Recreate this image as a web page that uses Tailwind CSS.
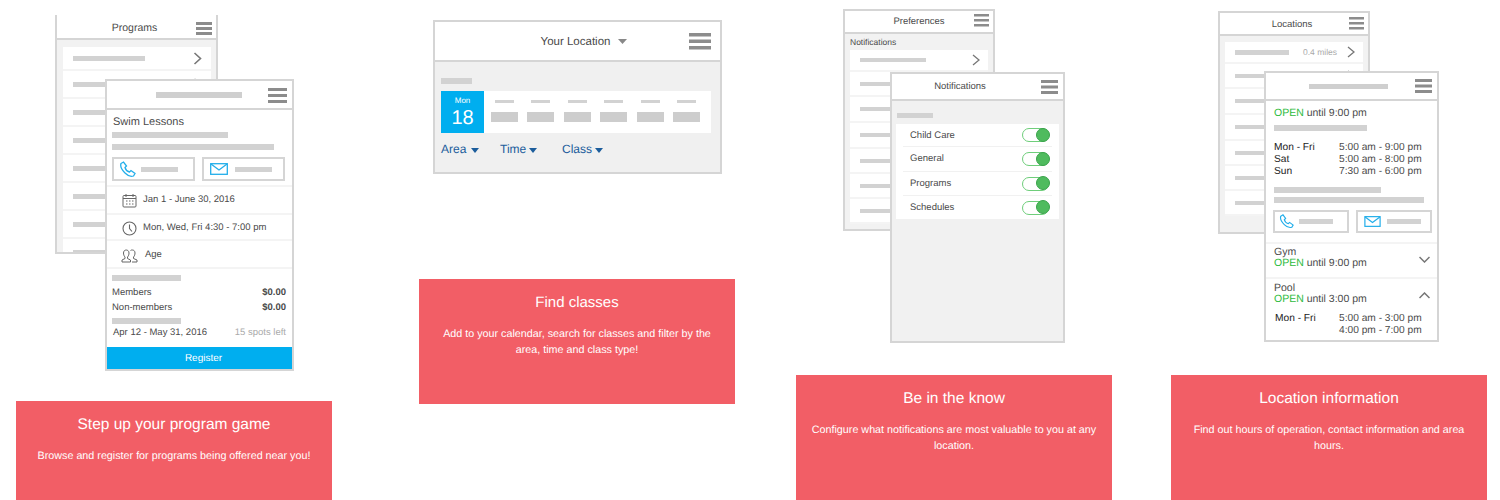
<!DOCTYPE html>
<html lang="en">
<head>
  <meta charset="UTF-8" />
  <title>App features</title>
  <script src="https://cdn.jsdelivr.net/npm/@tailwindcss/browser@4"></script>
</head>
<body class="flex h-[500px] w-[1500px] overflow-hidden bg-white pl-[16px] font-['Liberation_Sans',Arial,sans-serif] text-[#4a4a4a] [text-rendering:geometricPrecision]">

  <!-- programs -->
  <section class="w-[316px] shrink-0">
    <div class="relative h-[401px]">
      <div class="absolute left-[39px] top-[15px] h-[239px] w-[163px] overflow-hidden border-x-2 border-b-2 border-[#d5d5d5] bg-[#f2f2f2]">
        <div class="flex h-[25px] items-center justify-center border-b-2 border-[#d5d5d5] bg-white pr-[4px] pt-[4px] text-[10.5px]">Programs
          <svg class="absolute right-[3px] top-[7px]" width="17" height="14" viewBox="0 0 17 14" fill="#8c8c8c"><rect width="16" height="3" y="0"/><rect width="16" height="3" y="5"/><rect width="16" height="3" y="10"/></svg>
        </div>
        <div class="ml-[6px] mr-[5px] mt-[7px] bg-white">
          <div class="flex h-[24px] items-center justify-between border-b-2 border-[#f4f4f4] pl-[10px] pr-[9px]"><div class="h-[5px] w-[72px] bg-[#d2d2d2]"></div><svg width="9" height="13" viewBox="0 0 9 13" fill="none" stroke="#777" stroke-width="1.6"><path d="M1.500 1l6 5.500-6 5.500"/></svg></div>
          <div class="flex h-[28px] items-center justify-between border-b-2 border-[#f4f4f4] pl-[10px] pr-[9px]"><div class="h-[5px] w-[72px] bg-[#d2d2d2]"></div><svg width="9" height="13" viewBox="0 0 9 13" fill="none" stroke="#777" stroke-width="1.6"><path d="M1.500 1l6 5.500-6 5.500"/></svg></div>
          <div class="flex h-[28px] items-center border-b-2 border-[#f4f4f4] pl-[10px]"><div class="h-[5px] w-[72px] bg-[#d2d2d2]"></div></div>
          <div class="flex h-[28px] items-center border-b-2 border-[#f4f4f4] pl-[10px]"><div class="h-[5px] w-[72px] bg-[#d2d2d2]"></div></div>
          <div class="flex h-[28px] items-center border-b-2 border-[#f4f4f4] pl-[10px]"><div class="h-[5px] w-[72px] bg-[#d2d2d2]"></div></div>
          <div class="flex h-[28px] items-center border-b-2 border-[#f4f4f4] pl-[10px]"><div class="h-[5px] w-[72px] bg-[#d2d2d2]"></div></div>
          <div class="flex h-[28px] items-center border-b-2 border-[#f4f4f4] pl-[10px]"><div class="h-[5px] w-[72px] bg-[#d2d2d2]"></div></div>
          <div class="flex h-[28px] items-center border-b-2 border-[#f4f4f4] pl-[10px]"><div class="h-[5px] w-[72px] bg-[#d2d2d2]"></div></div>
        </div>
      </div>
      <div class="absolute left-[89px] top-[79px] h-[292px] w-[189px] overflow-hidden border-2 border-[#d5d5d5] bg-white">
        <div class="relative flex h-[29px] items-center border-b-2 border-[#d5d5d5] pl-[49px]">
          <div class="h-[6px] w-[86px] bg-[#cfcfcf]"></div>
          <svg class="absolute right-[5px] top-[7px]" width="19" height="15" viewBox="0 0 19 15" fill="#8c8c8c"><rect width="19" height="3" y="0"/><rect width="19" height="3" y="6"/><rect width="19" height="3" y="12"/></svg>
        </div>
        <div class="px-[5px]">
          <p class="pl-[1px] pt-[5px] text-[11px] leading-[14px]">Swim Lessons</p>
          <div class="mt-[3px] h-[6px] w-[116px] bg-[#d2d2d2]"></div>
          <div class="mt-[6px] h-[6px] w-[162px] bg-[#d2d2d2]"></div>
          <div class="mt-[7px] flex gap-[7px]">
            <div class="flex h-[24px] w-[83px] shrink-0 items-center border-2 border-[#d5d5d5] pl-[5px]">
              <svg width="17" height="17" viewBox="0 0 17 17" fill="none" stroke="#22aeea" stroke-width="1.3"><path d="M2 2.500l2.500-1.500 3 4-1.500 1.500c.5 2 2.500 4 4.500 4.500l1.500-1.500 4 3-1.500 2.500c-3 1-6-.5-8.500-3S1 5.500 2 2.500z"/></svg>
              <div class="ml-[5px] h-[5px] w-[37px] bg-[#d2d2d2]"></div>
            </div>
            <div class="flex h-[24px] w-[83px] shrink-0 items-center border-2 border-[#d5d5d5] pl-[6px]">
              <svg width="18" height="12" viewBox="0 0 18 12" fill="none" stroke="#22aeea" stroke-width="1.300"><rect x=".7" y=".7" width="16.600" height="10.600"/><path d="M1 1l8 6 8-6"/></svg>
              <div class="ml-[7px] h-[5px] w-[37px] bg-[#d2d2d2]"></div>
            </div>
          </div>
        </div>
        <div class="mt-[4px] flex h-[28px] items-center border-t-2 border-[#f4f4f4] pl-[15px] text-[9.500px]">
          <svg width="15" height="15" viewBox="0 0 15 15" fill="none" stroke="#666" stroke-width="1"><rect x="1" y="2.500" width="13" height="11.500" rx="1"/><path d="M1 5.500h13M4 1v3M11 1v3M4 8h1.500M7 8h1.500M10 8h1.500M4 11h1.500M7 11h1.500M10 11h1.500"/></svg>
          <span class="ml-[6px]">Jan 1 - June 30, 2016</span>
        </div>
        <div class="flex h-[26px] items-center border-t-2 border-[#f4f4f4] pl-[15px] pt-[2px] text-[9.500px]">
          <svg width="15" height="15" viewBox="0 0 15 15" fill="none" stroke="#666" stroke-width="1.100"><circle cx="7.500" cy="7.500" r="6.500"/><path d="M7.500 3.500v4l2.500 3"/></svg>
          <span class="ml-[6px]">Mon, Wed, Fri 4:30 - 7:00 pm</span>
        </div>
        <div class="flex h-[28px] items-center border-t-2 border-[#f4f4f4] pl-[14px] pt-[3px] text-[9.500px]">
          <svg width="17" height="14" viewBox="0 0 17 14" fill="none" stroke="#666" stroke-width="1"><path d="M1 13v-2l3-1.500V8C3 7 2.500 5.500 2.500 4c0-2 1.300-3 2.700-3s2.800 1 2.800 3c0 1.500-.5 3-1.500 4v1.500l3 1.500v2zM9.500 1.500C10 1 10.500 1 11.300 1c1.500 0 2.700 1 2.700 3 0 1.500-.5 3-1.500 4v1.500l3.500 1.500v2h-5"/></svg>
          <span class="ml-[7px]">Age</span>
        </div>
        <div class="border-t-2 border-[#f4f4f4] px-[5px] text-[9.500px]">
          <div class="mt-[6px] h-[6px] w-[69px] bg-[#d2d2d2]"></div>
          <div class="mt-[4px] flex h-[16px] items-center justify-between pr-[1px]"><span>Members</span><b class="font-bold">$0.00</b></div>
          <div class="flex h-[15px] items-center justify-between pr-[1px]"><span>Non-members</span><b class="font-bold">$0.00</b></div>
          <div class="mt-[2px] h-[6px] w-[69px] bg-[#d2d2d2]"></div>
          <div class="mt-[1px] flex h-[16px] items-center justify-between pl-[1px] pr-[1px]"><span>Apr 12 - May 31, 2016</span><span class="text-[#aaa]">15 spots left</span></div>
        </div>
        <div class="absolute inset-x-0 bottom-0 flex h-[22px] items-center justify-center bg-[#00aeef] pl-[8px] text-[10px] text-white">Register</div>
      </div>
    </div>
    <div class="h-[99px] bg-[#f25e66] px-[12px] text-center text-white">
      <h2 class="pt-[15px] text-[15.500px] leading-[18px]">Step up your program game</h2>
      <p class="mt-[14px] text-[10.750px] leading-[16px]">Browse and register for programs being offered near you!</p>
    </div>
  </section>

  <!-- classes -->
  <section class="ml-[87px] w-[316px] shrink-0">
    <div class="ml-[14px] mt-[20px] h-[154px] w-[289px] border-2 border-[#d5d5d5] bg-[#f0f0f0]">
      <div class="relative flex h-[40px] items-center justify-center border-b-2 border-[#d5d5d5] bg-white pl-[13px] pt-[4px] text-[11.500px]">
        Your Location
        <svg class="-mt-[3px] ml-[8px]" width="9" height="5" viewBox="0 0 9 5" fill="#888"><path d="M0 0h9L4.500 5z"/></svg>
        <svg class="absolute right-[9px] top-[11px]" width="22" height="17" viewBox="0 0 22 17" fill="#8c8c8c"><rect width="22" height="3.500" y="0"/><rect width="22" height="3.500" y="6.500"/><rect width="22" height="3.500" y="13"/></svg>
      </div>
      <div class="ml-[6px] mt-[16px] h-[6px] w-[31px] bg-[#d2d2d2]"></div>
      <div class="ml-[6px] mt-[7px] flex h-[42px] w-[270px] bg-white">
        <div class="flex w-[43px] flex-col items-center bg-[#00aeef] pt-[5px] text-white">
          <span class="text-[8px] leading-[10px]">Mon</span>
          <span class="text-[20px] leading-[24px]">18</span>
        </div>
        <div class="flex gap-[9.400px] pl-[7px] pt-[9px]">
          <div class="flex flex-col items-center gap-[9px]"><div class="h-[3px] w-[19px] bg-[#d2d2d2]"></div><div class="h-[10px] w-[27px] bg-[#cdcdcd]"></div></div>
          <div class="flex flex-col items-center gap-[9px]"><div class="h-[3px] w-[19px] bg-[#d2d2d2]"></div><div class="h-[10px] w-[27px] bg-[#cdcdcd]"></div></div>
          <div class="flex flex-col items-center gap-[9px]"><div class="h-[3px] w-[19px] bg-[#d2d2d2]"></div><div class="h-[10px] w-[27px] bg-[#cdcdcd]"></div></div>
          <div class="flex flex-col items-center gap-[9px]"><div class="h-[3px] w-[19px] bg-[#d2d2d2]"></div><div class="h-[10px] w-[27px] bg-[#cdcdcd]"></div></div>
          <div class="flex flex-col items-center gap-[9px]"><div class="h-[3px] w-[19px] bg-[#d2d2d2]"></div><div class="h-[10px] w-[27px] bg-[#cdcdcd]"></div></div>
          <div class="flex flex-col items-center gap-[9px]"><div class="h-[3px] w-[19px] bg-[#d2d2d2]"></div><div class="h-[10px] w-[27px] bg-[#cdcdcd]"></div></div>
        </div>
      </div>
      <div class="mt-[8px] flex pl-[6px] text-[12px] leading-[16px] text-[#1c5d9c]">
        <span class="flex w-[59px] items-center">Area<svg class="ml-[5px] mt-[2px]" width="8" height="5" viewBox="0 0 8 5" fill="#1c5d9c"><path d="M0 0h8L4 5z"/></svg></span>
        <span class="flex w-[62px] items-center">Time<svg class="ml-[3px] mt-[2px]" width="8" height="5" viewBox="0 0 8 5" fill="#1c5d9c"><path d="M0 0h8L4 5z"/></svg></span>
        <span class="flex items-center">Class<svg class="ml-[3px] mt-[2px]" width="8" height="5" viewBox="0 0 8 5" fill="#1c5d9c"><path d="M0 0h8L4 5z"/></svg></span>
      </div>
    </div>
    <div class="mt-[105px] h-[125px] bg-[#f25e66] px-[20px] text-center text-white">
      <h2 class="pt-[15px] text-[15px] leading-[18px]">Find classes</h2>
      <p class="mt-[14px] text-[10.750px] leading-[16px]">Add to your calendar, search for classes and filter by the area, time and class type!</p>
    </div>
  </section>

  <!-- notifications -->
  <section class="ml-[61px] w-[316px] shrink-0">
    <div class="relative h-[375px]">
      <div class="absolute left-[47px] top-[9px] h-[222px] w-[152px] overflow-hidden border-2 border-[#d5d5d5] bg-[#f2f2f2]">
        <div class="relative flex h-[23px] items-center justify-center border-b-2 border-[#d5d5d5] bg-white pt-[2px] text-[9.500px]">Preferences
          <svg class="absolute right-[4px] top-[3px]" width="15" height="13" viewBox="0 0 15 13" fill="#8c8c8c"><rect width="15" height="2.500" y="0"/><rect width="15" height="2.500" y="5"/><rect width="15" height="2.500" y="10"/></svg>
        </div>
        <p class="pl-[5px] pt-[2px] text-[8.500px] leading-[12px]">Notifications</p>
        <div class="mx-[5px] mt-[2px] bg-white">
          <div class="flex h-[22px] items-center justify-between border-b-2 border-[#f4f4f4] pl-[10px] pr-[8px]"><div class="h-[4px] w-[66px] bg-[#d2d2d2]"></div><svg width="8" height="12" viewBox="0 0 8 12" fill="none" stroke="#777" stroke-width="1.300"><path d="M1 1l6 5-6 5"/></svg></div>
          <div class="flex h-[25px] items-center border-b-2 border-[#f4f4f4] pl-[10px]"><div class="h-[4px] w-[66px] bg-[#d2d2d2]"></div></div>
          <div class="flex h-[26px] items-center border-b-2 border-[#f4f4f4] pl-[10px]"><div class="h-[4px] w-[66px] bg-[#d2d2d2]"></div></div>
          <div class="flex h-[26px] items-center border-b-2 border-[#f4f4f4] pl-[10px]"><div class="h-[4px] w-[66px] bg-[#d2d2d2]"></div></div>
          <div class="flex h-[25px] items-center border-b-2 border-[#f4f4f4] pl-[10px]"><div class="h-[4px] w-[66px] bg-[#d2d2d2]"></div></div>
          <div class="flex h-[25px] items-center border-b-2 border-[#f4f4f4] pl-[10px]"><div class="h-[4px] w-[66px] bg-[#d2d2d2]"></div></div>
          <div class="flex h-[25px] items-center border-b-2 border-[#f4f4f4] pl-[10px]"><div class="h-[4px] w-[66px] bg-[#d2d2d2]"></div></div>
        </div>
      </div>
      <div class="absolute left-[94px] top-[72px] h-[271px] w-[175px] border-2 border-[#d5d5d5] bg-[#f1f1f1]">
        <div class="relative flex h-[27px] items-center justify-center border-b-2 border-[#d5d5d5] bg-white pr-[35px] pt-[2px] text-[9.500px]">Notifications
          <svg class="absolute right-[5px] top-[6px]" width="17" height="14" viewBox="0 0 17 14" fill="#8c8c8c"><rect width="17" height="3" y="0"/><rect width="17" height="3" y="5.500"/><rect width="17" height="3" y="11"/></svg>
        </div>
        <div class="ml-[5px] mt-[12px] h-[5px] w-[36px] bg-[#d2d2d2]"></div>
        <div class="ml-[4px] mt-[6px] w-[163px] bg-white px-[7px] text-[9.500px]">
          <div class="flex h-[23px] items-center justify-between border-b border-[#f1f1f1] pl-[7px] pr-[3px] pt-[2px]">Child Care<div class="-mt-[2px] flex h-[14px] w-[27px] justify-end rounded-full border-[1.500px] border-[#6fce7b]"><div class="-my-[1.500px] -mr-[1.500px] size-[14px] rounded-full border border-[#3aa34b] bg-[#4fbb5e]"></div></div></div>
          <div class="flex h-[25px] items-center justify-between border-b border-[#f1f1f1] pl-[7px] pr-[3px]">General<div class="flex h-[14px] w-[27px] justify-end rounded-full border-[1.500px] border-[#6fce7b]"><div class="-my-[1.500px] -mr-[1.500px] size-[14px] rounded-full border border-[#3aa34b] bg-[#4fbb5e]"></div></div></div>
          <div class="flex h-[24px] items-center justify-between border-b border-[#f1f1f1] pl-[7px] pr-[3px] pt-[2px]">Programs<div class="-mt-[2px] flex h-[14px] w-[27px] justify-end rounded-full border-[1.500px] border-[#6fce7b]"><div class="-my-[1.500px] -mr-[1.500px] size-[14px] rounded-full border border-[#3aa34b] bg-[#4fbb5e]"></div></div></div>
          <div class="flex h-[23px] items-center justify-between pl-[7px] pr-[3px] pt-[2px]">Schedules<div class="-mt-[2px] flex h-[14px] w-[27px] justify-end rounded-full border-[1.500px] border-[#6fce7b]"><div class="-my-[1.500px] -mr-[1.500px] size-[14px] rounded-full border border-[#3aa34b] bg-[#4fbb5e]"></div></div></div>
        </div>
      </div>
    </div>
    <div class="h-[125px] bg-[#f25e66] px-[12px] text-center text-white">
      <h2 class="pt-[15px] text-[15.500px] leading-[18px]">Be in the know</h2>
      <p class="mt-[14px] text-[10.750px] leading-[16px]">Configure what notifications are most valuable to you at any location.</p>
    </div>
  </section>

  <!-- locations -->
  <section class="ml-[59px] w-[316px] shrink-0">
    <div class="relative h-[375px]">
      <div class="absolute left-[47px] top-[11px] h-[223px] w-[152px] overflow-hidden border-2 border-[#d5d5d5] bg-[#f2f2f2]">
        <div class="relative flex h-[23px] items-center justify-center border-b-2 border-[#d5d5d5] bg-white pr-[4px] pt-[4px] text-[9.500px]">Locations
          <svg class="absolute right-[4px] top-[4px]" width="15" height="13" viewBox="0 0 15 13" fill="#8c8c8c"><rect width="15" height="2.500" y="0"/><rect width="15" height="2.500" y="5"/><rect width="15" height="2.500" y="10"/></svg>
        </div>
        <div class="mx-[5px] mt-[6px] bg-white">
          <div class="flex h-[22px] items-center border-b-2 border-[#f4f4f4] pl-[10px] pr-[8px] text-[8.500px] text-[#aaa]"><div class="h-[5px] w-[54px] bg-[#d2d2d2]"></div><span class="ml-[14px]">0.4 miles</span><svg class="ml-auto" width="8" height="12" viewBox="0 0 8 12" fill="none" stroke="#777" stroke-width="1.300"><path d="M1 1l6 5-6 5"/></svg></div>
          <div class="flex h-[25px] items-center justify-between border-b-2 border-[#f4f4f4] pl-[10px] pr-[8px]"><div class="h-[4px] w-[54px] bg-[#d2d2d2]"></div><svg width="8" height="12" viewBox="0 0 8 12" fill="none" stroke="#777" stroke-width="1.300"><path d="M1 1l6 5-6 5"/></svg></div>
          <div class="flex h-[26px] items-center border-b-2 border-[#f4f4f4] pl-[10px]"><div class="h-[4px] w-[54px] bg-[#d2d2d2]"></div></div>
          <div class="flex h-[26px] items-center border-b-2 border-[#f4f4f4] pl-[10px]"><div class="h-[4px] w-[54px] bg-[#d2d2d2]"></div></div>
          <div class="flex h-[25px] items-center border-b-2 border-[#f4f4f4] pl-[10px]"><div class="h-[4px] w-[54px] bg-[#d2d2d2]"></div></div>
          <div class="flex h-[25px] items-center border-b-2 border-[#f4f4f4] pl-[10px]"><div class="h-[4px] w-[54px] bg-[#d2d2d2]"></div></div>
          <div class="flex h-[25px] items-center border-b-2 border-[#f4f4f4] pl-[10px]"><div class="h-[4px] w-[54px] bg-[#d2d2d2]"></div></div>
        </div>
      </div>
      <div class="absolute left-[93px] top-[71px] h-[271px] w-[175px] overflow-hidden border-2 border-[#d5d5d5] bg-white text-[10px]">
        <div class="relative flex h-[28px] items-center border-b-2 border-[#d5d5d5] pl-[43px]">
          <div class="h-[5px] w-[79px] bg-[#cfcfcf]"></div>
          <svg class="absolute right-[5px] top-[6px]" width="17" height="14" viewBox="0 0 17 14" fill="#8c8c8c"><rect width="17" height="3" y="0"/><rect width="17" height="3" y="5.500"/><rect width="17" height="3" y="11"/></svg>
        </div>
        <div class="px-[8px]">
          <p class="pt-[6px] text-[10.500px] leading-[13px]"><span class="text-[#2dbb3d]">OPEN</span> until 9:00 pm</p>
          <div class="mt-[5px] h-[6px] w-[93px] bg-[#d2d2d2]"></div>
          <div class="mt-[11px] grid grid-cols-[65px_1fr] text-[10.200px] leading-[12px]">
            <b class="font-normal text-[#222]">Mon - Fri</b><span>5:00 am - 9:00 pm</span>
            <b class="font-normal text-[#222]">Sat</b><span>5:00 am - 8:00 pm</span>
            <b class="font-normal text-[#222]">Sun</b><span>7:30 am - 6:00 pm</span>
          </div>
          <div class="mt-[9px] h-[6px] w-[107px] bg-[#d2d2d2]"></div>
          <div class="mt-[4px] h-[6px] w-[150px] bg-[#d2d2d2]"></div>
          <div class="-ml-[1px] mt-[7px] flex gap-[7px]">
            <div class="flex h-[23px] w-[76px] shrink-0 items-center border-2 border-[#d5d5d5] pl-[4px]">
              <svg width="15" height="15" viewBox="0 0 17 17" fill="none" stroke="#22aeea" stroke-width="1.300"><path d="M2 2.500l2.500-1.500 3 4-1.500 1.500c.5 2 2.500 4 4.500 4.500l1.500-1.500 4 3-1.500 2.500c-3 1-6-.5-8.500-3S1 5.500 2 2.500z"/></svg>
              <div class="ml-[5px] h-[5px] w-[34px] bg-[#d2d2d2]"></div>
            </div>
            <div class="flex h-[23px] w-[76px] shrink-0 items-center border-2 border-[#d5d5d5] pl-[6px]">
              <svg width="17" height="11" viewBox="0 0 18 12" fill="none" stroke="#22aeea" stroke-width="1.300"><rect x=".7" y=".7" width="16.600" height="10.600"/><path d="M1 1l8 6 8-6"/></svg>
              <div class="ml-[6px] h-[5px] w-[34px] bg-[#d2d2d2]"></div>
            </div>
          </div>
        </div>
        <div class="mt-[9px] flex h-[35px] items-center justify-between border-t-2 border-[#f4f4f4] pb-[5px] pl-[8px] pr-[7px] text-[10.500px]">
          <p class="leading-[11px]">Gym<br /><span class="text-[#2dbb3d]">OPEN</span> until 9:00 pm</p>
          <svg class="mt-[2px]" width="11" height="7" viewBox="0 0 11 7" fill="none" stroke="#777" stroke-width="1.500"><path d="M.5 1l5 5 5-5"/></svg>
        </div>
        <div class="flex h-[35px] items-center justify-between border-t-2 border-[#f4f4f4] pb-[4px] pl-[8px] pr-[7px] text-[10.500px]">
          <p class="leading-[11px]">Pool<br /><span class="text-[#2dbb3d]">OPEN</span> until 3:00 pm</p>
          <svg class="mt-[4px]" width="11" height="7" viewBox="0 0 11 7" fill="none" stroke="#777" stroke-width="1.500"><path d="M.5 6l5-5 5 5"/></svg>
        </div>
        <div class="grid grid-cols-[64px_1fr] pl-[9px] pt-[1px] text-[10.200px] leading-[12px]">
          <b class="font-normal text-[#222]">Mon - Fri</b><span>5:00 am - 3:00 pm</span>
          <span></span><span>4:00 pm - 7:00 pm</span>
        </div>
      </div>
    </div>
    <div class="h-[125px] bg-[#f25e66] px-[12px] text-center text-white">
      <h2 class="pt-[15px] text-[15.500px] leading-[18px]">Location information</h2>
      <p class="mt-[14px] text-[10.750px] leading-[16px]">Find out hours of operation, contact information and area hours.</p>
    </div>
  </section>

</body>
</html>
